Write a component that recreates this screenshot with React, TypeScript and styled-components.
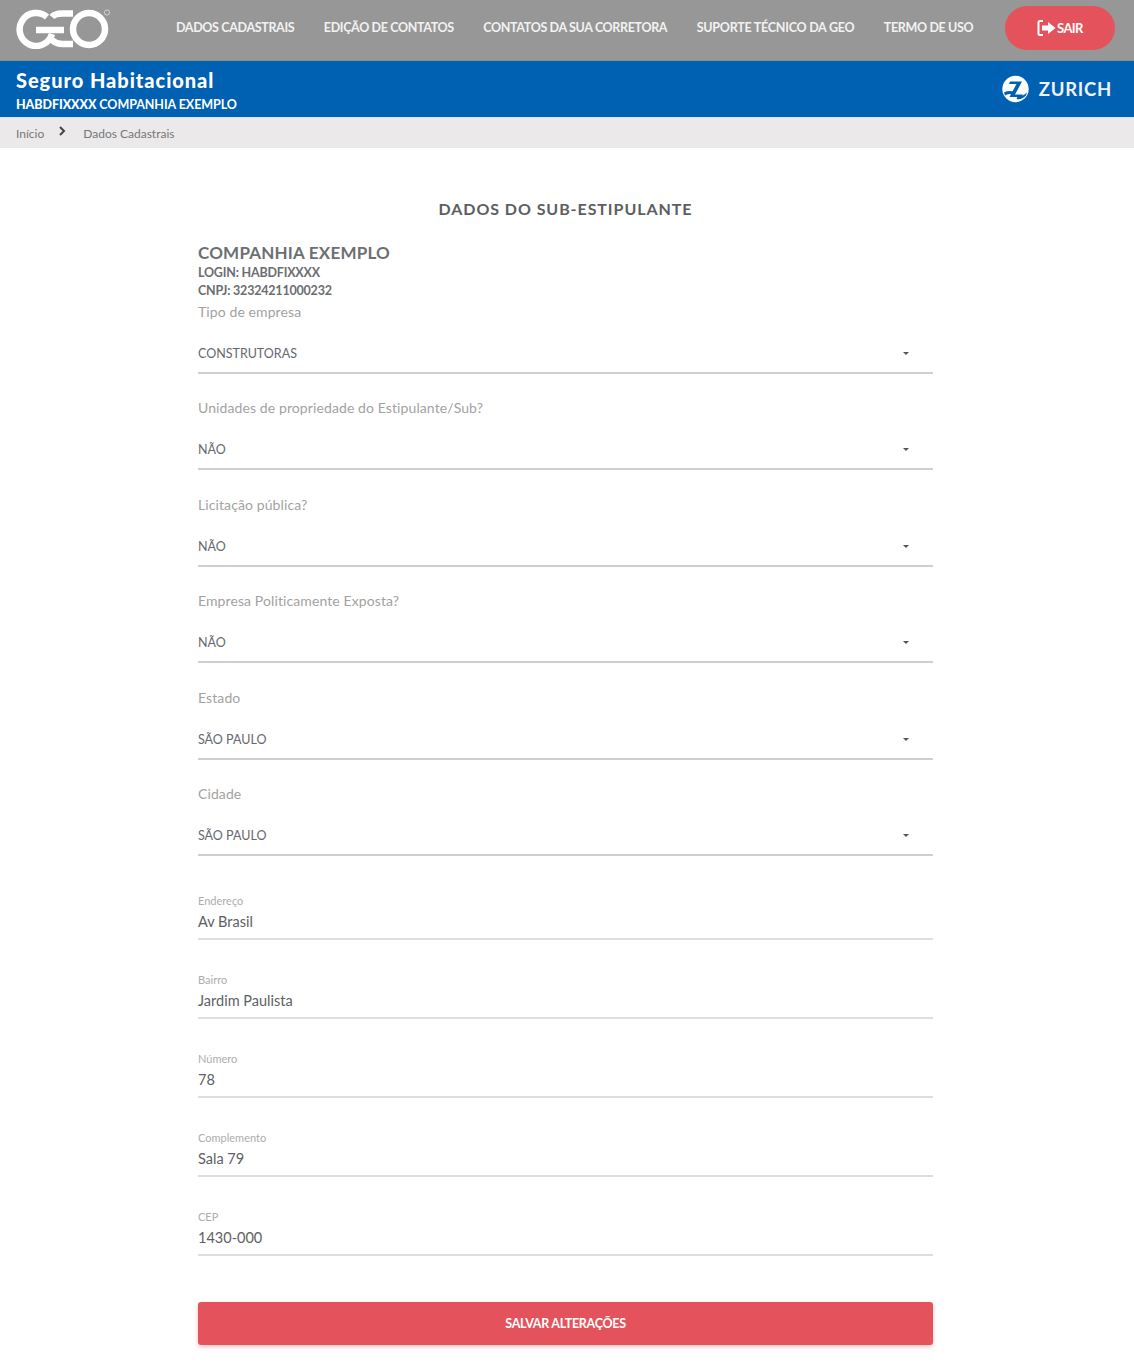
import React from "react";
import styled, { createGlobalStyle } from "styled-components";

const Global = createGlobalStyle`
  html, body { margin: 0; padding: 0; background: #fff; }
  body { font-family: "Lato", "Open Sans", sans-serif; }
  * { box-sizing: border-box; }
`;
const Page = styled.div`width: 1134px; height: 1362px; overflow: hidden; background: #fff;`;
const TopBar = styled.header`
  height: 61px; background: #979797; display: flex; align-items: center;
  padding: 0 19px 5px 16px; border-bottom: 1px solid #8c8c8c;
`;
const Nav = styled.nav`display: flex; align-items: center; margin-left: 64px; gap: 29.5px; flex: 1;`;
const NavLink = styled.a<{ $spacing: number }>`
  color: #f2f2f2; font-size: 12.5px; font-weight: 700; letter-spacing: ${(p) => p.$spacing}px; white-space: nowrap;
`;
const LogoutButton = styled.button`
  width: 110px; height: 44px; margin-top: 1px; border: 0; border-radius: 22px; background: #e4535b;
  color: #fff; font: 700 13px "Lato", sans-serif; letter-spacing: -0.6px;
  display: flex; align-items: center; justify-content: center; gap: 0;
`;
const BlueBar = styled.div`
  height: 56px; background: #0060b1; display: flex; align-items: center; justify-content: space-between;
  padding: 0 22px 0 16px; color: #fff;
`;
const BarText = styled.div`align-self: flex-start; padding-top: 7.5px;`;
const BarTitle = styled.div`font-size: 20px; line-height: 22px; font-weight: 900; letter-spacing: 0.95px;`;
const BarSub = styled.div`margin-top: 6px; font-size: 12.5px; line-height: 15px; font-weight: 700; letter-spacing: -0.07px; strong { font-weight: 900; }`;
const ZurichMark = styled.div`display: flex; align-items: center; gap: 10px;`;
const ZurichText = styled.span`font-size: 18.5px; font-weight: 700; letter-spacing: 0.75px; color: #eef3f8;`;
const Breadcrumb = styled.div`
  height: 31px; background: #ebe9ea; border-top: 1px solid #dfe3e8; display: flex; align-items: center;
  padding: 0 16px; color: #77777a; font-size: 12px; letter-spacing: 0;
`;
const Crumb = styled.span`white-space: nowrap;`;
const CrumbArrow = styled.span`display: flex; margin: -4px 14px 0 11px; color: #444;`;
const Form = styled.main`width: 735px; margin: 0 0 0 198px; display: flex; flex-direction: column;`;
const Title = styled.h1`
  margin: 51px 0 0; height: 20px; line-height: 20px; text-align: center; font-size: 16px; font-weight: 700;
  color: #5c5e62; letter-spacing: 0.93px;
`;
const Company = styled.h2`margin: 23px 0 0; height: 22px; line-height: 22px; font-size: 17px; font-weight: 700; color: #6c6f73; letter-spacing: 0.2px;`;
const Meta = styled.div`height: 18px; line-height: 18px; font-size: 12.5px; font-weight: 700; letter-spacing: -0.2px; color: #6b6d71;`;
const SelectField = styled.div`height: 96.4px; display: flex; flex-direction: column;`;
const SelectList = styled.div`margin-top: 2px;`;
const SelectLabel = styled.div`height: 20px; line-height: 20px; font-size: 14px; letter-spacing: 0.1px; color: #a2a2a2;`;
const SelectBox = styled.div`
  margin-top: 11px; height: 41px; padding: 2px 24px 0 0; display: flex; align-items: center; justify-content: space-between;
  font-size: 12.5px; color: #66686c; border-bottom: 2px solid #cfcfcf;
`;
const Caret = styled.span`width: 0; height: 0; border-left: 3px solid transparent; border-right: 3px solid transparent; border-top: 3px solid #555;`;
const FieldList = styled.div`display: flex; flex-direction: column; margin-top: 5px;`;
const TextField = styled.div`height: 79px; display: flex; flex-direction: column;`;
const FieldLabel = styled.div`height: 14px; line-height: 14px; margin-top: 9px; font-size: 11px; color: #adadad;`;
const FieldValue = styled.div`height: 23px; line-height: 23px; margin-top: 2px; font-size: 14.5px; color: #5e6064;`;
const FieldLine = styled.div`height: 2px; margin-top: 5px; background: #dedede;`;
const Save = styled.button`
  margin-top: 22px; width: 735px; height: 43px; border: 0; border-radius: 3px; background: #e4535b; color: #fff;
  font: 700 12.5px "Lato", sans-serif; letter-spacing: -0.3px; box-shadow: 0 2px 4px rgba(228,83,91,.35);
`;

const GeoLogo = () => (
  <svg width="96" height="42" viewBox="0 0 96 42" aria-label="GEO">
    <g fill="none" stroke="#fff" strokeWidth="6.5">
      <path d="M31 10 A16.500 16.500 0 1 0 36 27" />
      <path d="M20 23 H48" />
      <path d="M57 6.500 H46 Q39 6.500 36 10 M36 33 Q40 37 47 37 H57" />
      <circle cx="73" cy="22" r="16" />
    </g>
    <circle cx="91" cy="5.500" r="2.600" fill="none" stroke="#ddd" strokeWidth=".8" />
  </svg>
);

const ZurichLogo = () => (
  <svg width="27" height="28" viewBox="0 0 27 28" aria-label="Zurich">
    <circle cx="13.500" cy="14" r="13.200" fill="#fff" />
    <path d="M8 6.500 H20 L13 19.500 H21 L19.500 22 H7.500 L14.500 9 H7 Z" fill="#0060b1" />
    <path d="M2 17.500 Q7 15 12.500 17 L11 19.500 Q6 18 3 20.500 Z M15.500 21.500 Q20 22 25 17.500 L24 20.500 Q20 25 14.500 24 Z" fill="#0060b1" />
  </svg>
);

const LogoutIcon = () => (
  <svg width="20" height="18" viewBox="0 0 20 18">
    <path d="M6 2 H3 Q1.500 2 1.500 3.500 V14.500 Q1.500 16 3 16 H6" fill="none" stroke="#fff" strokeWidth="2" />
    <path d="M5 6.500 H11 V3 L18.500 9 L11 15 V11.500 H5 Z" fill="#fff" />
  </svg>
);

const links: [string, number][] = [
  ["DADOS CADASTRAIS", -0.35],
  ["EDIÇÃO DE CONTATOS", -0.35],
  ["CONTATOS DA SUA CORRETORA", -0.35],
  ["SUPORTE TÉCNICO DA GEO", -0.25],
  ["TERMO DE USO", -0.35],
];
const selects = [
  ["Tipo de empresa", "CONSTRUTORAS"],
  ["Unidades de propriedade do Estipulante/Sub?", "NÃO"],
  ["Licitação pública?", "NÃO"],
  ["Empresa Politicamente Exposta?", "NÃO"],
  ["Estado", "SÃO PAULO"],
  ["Cidade", "SÃO PAULO"],
];
const fields = [
  ["Endereço", "Av Brasil"],
  ["Bairro", "Jardim Paulista"],
  ["Número", "78"],
  ["Complemento", "Sala 79"],
  ["CEP", "1430-000"],
];

export default function App() {
  return (
    <Page>
      <Global />
      <TopBar>
        <GeoLogo />
        <Nav>{links.map(([l, s]) => <NavLink key={l} $spacing={s}>{l}</NavLink>)}</Nav>
        <LogoutButton><LogoutIcon />SAIR</LogoutButton>
      </TopBar>
      <BlueBar>
        <BarText>
          <BarTitle>Seguro Habitacional</BarTitle>
          <BarSub><strong>HABDFIXXXX</strong> COMPANHIA EXEMPLO</BarSub>
        </BarText>
        <ZurichMark><ZurichLogo /><ZurichText>ZURICH</ZurichText></ZurichMark>
      </BlueBar>
      <Breadcrumb>
        <Crumb>Início</Crumb>
        <CrumbArrow>
          <svg width="14" height="14" viewBox="0 0 14 14"><path d="M5 3 L9 7 L5 11" fill="none" stroke="currentColor" strokeWidth="2" /></svg>
        </CrumbArrow>
        <Crumb>Dados Cadastrais</Crumb>
      </Breadcrumb>
      <Form>
        <Title>DADOS DO SUB-ESTIPULANTE</Title>
        <Company>COMPANHIA EXEMPLO</Company>
        <Meta>LOGIN: HABDFIXXXX</Meta>
        <Meta>CNPJ: 32324211000232</Meta>
        <SelectList>
          {selects.map(([label, value]) => (
            <SelectField key={label}>
              <SelectLabel>{label}</SelectLabel>
              <SelectBox>{value}<Caret /></SelectBox>
            </SelectField>
          ))}
        </SelectList>
        <FieldList>
          {fields.map(([label, value]) => (
            <TextField key={label}>
              <FieldLabel>{label}</FieldLabel>
              <FieldValue>{value}</FieldValue>
              <FieldLine />
            </TextField>
          ))}
        </FieldList>
        <Save>SALVAR ALTERAÇÕES</Save>
      </Form>
    </Page>
  );
}
